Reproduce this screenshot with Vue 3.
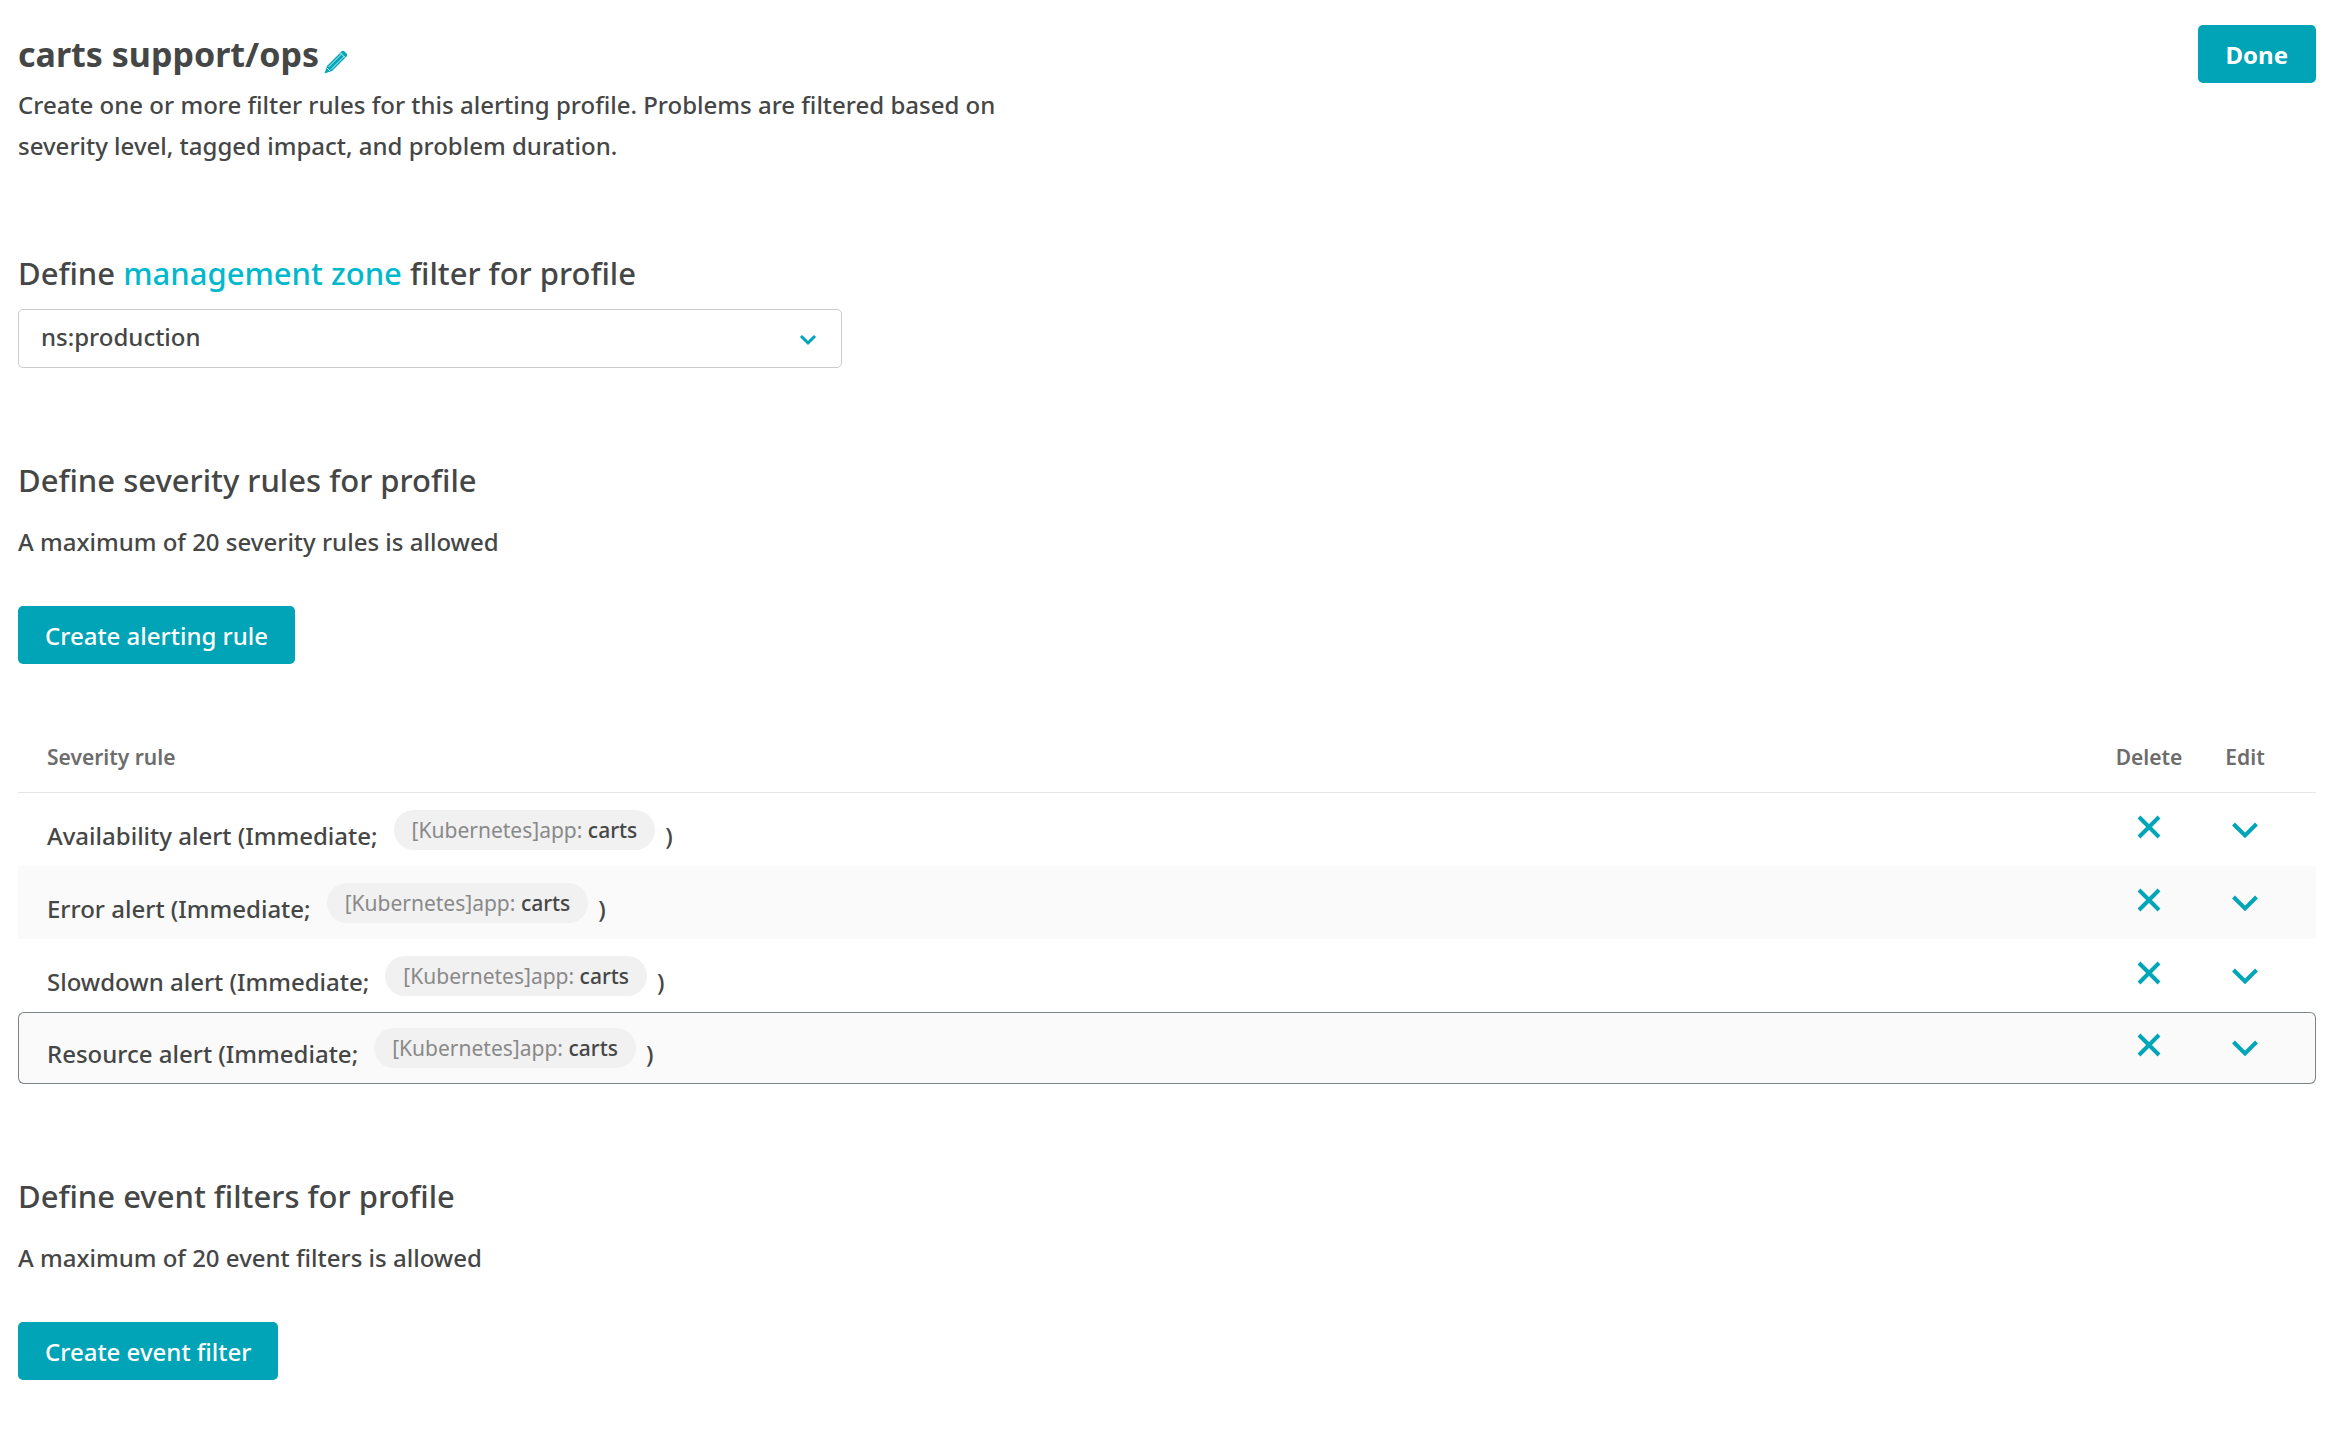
<script setup>
import { ref } from 'vue'

const zone = ref('ns:production')
const zones = ['ns:production']

const rules = ref([
  { name: 'Availability alert', tag: '[Kubernetes]app:', value: 'carts' },
  { name: 'Error alert', tag: '[Kubernetes]app:', value: 'carts' },
  { name: 'Slowdown alert', tag: '[Kubernetes]app:', value: 'carts' },
  { name: 'Resource alert', tag: '[Kubernetes]app:', value: 'carts' },
])
const selected = ref(3)
</script>

<template>
  <main class="page">
    <header class="header">
      <div class="intro">
        <div class="title-row">
          <h1>carts support/ops</h1>
          <button class="icon-button" type="button" aria-label="Rename profile">
            <svg class="pencil" viewBox="0 0 24 24" aria-hidden="true">
              <path d="M.5 23.5 3 16 17.500 1.500Q19 0 20.500 1.500L22.500 3.500Q24 5 22.500 6.500L8 21Z" fill="#00a6b8" />
              <path d="M4.500 17 18 3.500M7 19.500 20.500 6M16.500 3l4.500 4.500M2.500 17.500l4 4" fill="none" stroke="#c9eef2" stroke-width="1" />
            </svg>
          </button>
        </div>
        <p class="description">
          Create one or more filter rules for this alerting profile. Problems are filtered based on
          severity level, tagged impact, and problem duration.
        </p>
      </div>
      <button class="primary done" type="button">Done</button>
    </header>

    <section class="zone">
      <h2 id="zone-title">Define <a href="#management-zone">management zone</a> filter for profile</h2>
      <div class="select-box">
        <select v-model="zone" aria-labelledby="zone-title">
          <option v-for="z in zones" :key="z">{{ z }}</option>
        </select>
        <svg class="select-arrow" viewBox="0 0 18 12" aria-hidden="true">
          <path d="M2 2l7 7 7-7" />
        </svg>
      </div>
    </section>

    <section class="rules">
      <h2>Define severity rules for profile</h2>
      <p>A maximum of 20 severity rules is allowed</p>
      <button class="primary" type="button">Create alerting rule</button>

      <table>
        <thead>
          <tr>
            <th class="col-name" scope="col">Severity rule</th>
            <th class="col-delete" scope="col">Delete</th>
            <th class="col-edit" scope="col">Edit</th>
          </tr>
        </thead>
        <tbody>
          <tr v-for="(rule, i) in rules" :key="rule.name" :class="{ selected: i === selected }">
            <td class="col-name">
              <div class="rule">
                <span>{{ rule.name }} (Immediate;</span>
                <span class="tag">{{ rule.tag }} <b>{{ rule.value }}</b></span>
                <span>)</span>
              </div>
            </td>
            <td class="col-delete">
              <button class="icon-button" type="button" :aria-label="'Delete ' + rule.name">
                <svg class="action" viewBox="0 0 34 34" aria-hidden="true">
                  <path d="M7 7l20 20M27 7l-20 20" />
                </svg>
              </button>
            </td>
            <td class="col-edit">
              <button class="icon-button" type="button" :aria-label="'Edit ' + rule.name">
                <svg class="action" viewBox="0 0 34 34" aria-hidden="true">
                  <path d="M5.500 14l11.500 11.500 11.500-11.500" />
                </svg>
              </button>
            </td>
          </tr>
        </tbody>
      </table>
    </section>

    <section class="filters">
      <h2>Define event filters for profile</h2>
      <p>A maximum of 20 event filters is allowed</p>
      <button class="primary" type="button">Create event filter</button>
    </section>
  </main>
</template>

<style>
body {
  background: #fff;
}
</style>

<style scoped>
.page {
  padding: 25px 26px 68px 18px;
  color: #454646;
  font-family: "Noto Sans", "Open Sans", sans-serif;
  font-size: 24px;
  font-weight: 500;
  line-height: 41px;
}

h1,
h2,
p {
  margin: 0;
}

h1 {
  font-size: 34px;
  font-weight: 700;
  line-height: 46px;
}

h2 {
  font-size: 31px;
  font-weight: 500;
  line-height: 42px;
}

h2 a {
  color: #00b9cc;
  text-decoration: none;
}

button,
select {
  font: inherit;
}

.header {
  display: flex;
  align-items: flex-start;
  justify-content: space-between;
}

.intro {
  padding-top: 6px;
}

.title-row {
  display: flex;
  align-items: flex-end;
  gap: 5px;
  margin-bottom: 7px;
}

.description {
  max-width: 1000px;
}

.icon-button {
  display: inline-flex;
  padding: 0;
  border: 0;
  background: none;
  cursor: pointer;
}

.pencil {
  width: 24px;
  height: 24px;
  margin-bottom: 3px;
}

.primary {
  display: block;
  height: 58px;
  padding: 0 27px;
  border: 0;
  border-radius: 5px;
  background: #00a4b6;
  color: #fff;
  cursor: pointer;
}

.done {
  padding: 0 28px;
  font-weight: 700;
}

.zone {
  margin-top: 86px;
}

.select-box {
  display: grid;
  align-items: center;
  max-width: 824px;
  margin-top: 15px;
}

.select-box > * {
  grid-area: 1 / 1;
}

select {
  appearance: none;
  width: 100%;
  height: 59px;
  padding: 0 60px 4px 22px;
  border: 1px solid #ccc;
  border-radius: 5px;
  background: #fff;
  color: inherit;
}

.select-arrow {
  justify-self: end;
  width: 18px;
  height: 12px;
  margin: 2px 25px 0 0;
  fill: none;
  stroke: #00a6b8;
  stroke-width: 3;
  pointer-events: none;
}

.rules,
.filters {
  margin-top: 91px;
}

.rules p,
.filters p {
  margin: 20px 0 44px;
}

table {
  width: 100%;
  margin-top: 79px;
  border-spacing: 0;
  line-height: 40px;
}

th {
  padding: 0 0 21px;
  border-bottom: 1px solid #e6e6e6;
  color: #6d6d6d;
  font-size: 21px;
  font-weight: 600;
  line-height: 28px;
}

td {
  padding: 17px 0 4px;
  vertical-align: top;
}

.col-name {
  padding-left: 29px;
  text-align: left;
}

.col-delete {
  width: 96px;
  text-align: center;
}

.col-edit {
  width: 96px;
  padding-right: 23px;
  text-align: center;
}

tbody tr:nth-child(even) {
  background: #fafafa;
}

.selected td {
  padding-top: 15px;
  padding-bottom: 3px;
  border: solid #7c8386;
  border-width: 1px 0;
}

.selected {
  border-radius: 6px;
}

.selected td:first-child {
  padding-left: 28px;
  border-left-width: 1px;
  border-radius: 6px 0 0 6px;
}

.selected td:last-child {
  padding-right: 22px;
  border-right-width: 1px;
  border-radius: 0 6px 6px 0;
}

.rule {
  display: flex;
  align-items: center;
}

.tag {
  margin: 0 10px 12px 16px;
  padding: 0 18px;
  border-radius: 20px;
  background: #f1f1f1;
  color: #898989;
  font-size: 21px;
  font-weight: 400;
}

.tag b {
  color: #454646;
  font-weight: 500;
}

.action {
  width: 34px;
  height: 34px;
  fill: none;
  stroke: #00a6b8;
  stroke-width: 4;
}
</style>
